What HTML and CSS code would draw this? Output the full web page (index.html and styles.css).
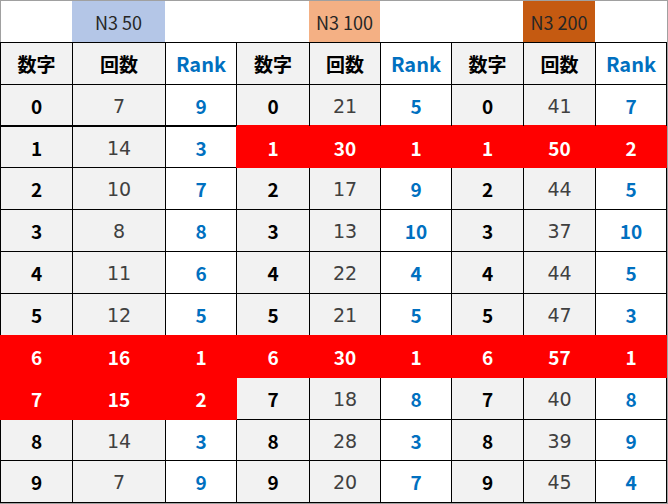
FILE: index.html
```html
<!DOCTYPE html>
<html lang="ja">
<head>
<meta charset="utf-8">
<title>N3</title>
<link rel="stylesheet" href="styles.css">
</head>
<body>
<div class="sheet">
  <div class="titles">
    <div></div><div class="t t50">N3 50</div><div></div>
    <div></div><div class="t t100">N3 100</div><div></div>
    <div></div><div class="t t200">N3 200</div><div></div>
  </div>
  <div class="grid">
    <div class="h">数字</div><div class="h">回数</div><div class="h hr">Rank</div>
    <div class="h">数字</div><div class="h">回数</div><div class="h hr">Rank</div>
    <div class="h">数字</div><div class="h">回数</div><div class="h hr">Rank</div>

    <div class="n first">0</div><div class="c first">7</div><div class="r first">9</div>
    <div class="n first">0</div><div class="c first">21</div><div class="r first">5</div>
    <div class="n first">0</div><div class="c first">41</div><div class="r first">7</div>

    <div class="n">1</div><div class="c">14</div><div class="r">3</div>
    <div class="hot hot-top">1</div><div class="hot hot-top">30</div><div class="hot hot-top">1</div>
    <div class="hot hot-top">1</div><div class="hot hot-top">50</div><div class="hot hot-top">2</div>

    <div class="n">2</div><div class="c">10</div><div class="r">7</div>
    <div class="n">2</div><div class="c">17</div><div class="r">9</div>
    <div class="n">2</div><div class="c">44</div><div class="r">5</div>

    <div class="n">3</div><div class="c">8</div><div class="r">8</div>
    <div class="n">3</div><div class="c">13</div><div class="r">10</div>
    <div class="n">3</div><div class="c">37</div><div class="r">10</div>

    <div class="n">4</div><div class="c">11</div><div class="r">6</div>
    <div class="n">4</div><div class="c">22</div><div class="r">4</div>
    <div class="n">4</div><div class="c">44</div><div class="r">5</div>

    <div class="n">5</div><div class="c">12</div><div class="r">5</div>
    <div class="n">5</div><div class="c">21</div><div class="r">5</div>
    <div class="n">5</div><div class="c">47</div><div class="r">3</div>

    <div class="hot">6</div><div class="hot">16</div><div class="hot">1</div>
    <div class="hot">6</div><div class="hot">30</div><div class="hot">1</div>
    <div class="hot">6</div><div class="hot">57</div><div class="hot">1</div>

    <div class="hot">7</div><div class="hot">15</div><div class="hot">2</div>
    <div class="n">7</div><div class="c">18</div><div class="r">8</div>
    <div class="n">7</div><div class="c">40</div><div class="r">8</div>

    <div class="n">8</div><div class="c">14</div><div class="r">3</div>
    <div class="n">8</div><div class="c">28</div><div class="r">3</div>
    <div class="n">8</div><div class="c">39</div><div class="r">9</div>

    <div class="n">9</div><div class="c">7</div><div class="r">9</div>
    <div class="n">9</div><div class="c">20</div><div class="r">7</div>
    <div class="n">9</div><div class="c">45</div><div class="r">4</div>
  </div>
</div>
</body>
</html>
```

FILE: styles.css
```css
html, body {
  margin: 0;
  padding: 0;
  background: #fff;
}

.sheet {
  width: 667px;
  border-top: 1px solid #a0a0a0;
  border-right: 1px solid #a0a0a0;
  border-bottom: 1px solid #a0a0a0;
  background: #fff;
}

.titles {
  display: grid;
  grid-template-columns: 71px 93px 71px 73px 71px 71px 72px 72px 72px;
  height: 41px;
  border-left: 1px solid #a0a0a0;
}

.t {
  display: flex;
  align-items: center;
  justify-content: center;
  font-family: "Noto Sans CJK JP", "Noto Sans", sans-serif;
  font-weight: 400;
  font-size: 18px;
  color: #262626;
}

.t50 { background: #b4c6e7; }
.t100 { background: #f4b084; }
.t200 { background: #c55a11; }

.grid {
  display: grid;
  grid-template-columns: 71px 92px 70px 72px 70px 70px 71px 71px 70px;
  grid-template-rows: 41px 41px 40px 41px 41px 41px 41px 41px 41px 40px 41px;
  gap: 1px;
  padding: 1px;
  background: #000;
}

.grid > div {
  display: flex;
  align-items: center;
  justify-content: center;
  font-size: 19px;
  font-family: "Noto Sans CJK JP", "Noto Sans", sans-serif;
  font-weight: 700;
}

.grid > .h {
  background: #f2f2f2;
  color: #000;
}

.grid > .hr {
  background: #fff;
  color: #0070c0;
  font-size: 20px;
}

.grid > .n {
  background: #f2f2f2;
  color: #000;
}

.grid > .c {
  background: #f2f2f2;
  font-family: "DejaVu Sans", "Liberation Sans", sans-serif;
  font-size: 19px;
  font-weight: 400;
  color: #404040;
  padding-top: 1px;
}

.grid > .r {
  background: #fff;
  color: #0070c0;
}

.grid > .first {
  margin-bottom: 1px;
}

.grid > .hot {
  background: #ff0000;
  color: #fff;
  font-family: "Noto Sans CJK JP", "Noto Sans", sans-serif;
  font-size: 19px;
  font-weight: 700;
  box-shadow: 0 0 0 1px #ff0000;
}

.grid > .hot-top {
  box-shadow: 0 0 0 1px #ff0000, 0 -2px 0 0 #ff0000;
}
```
